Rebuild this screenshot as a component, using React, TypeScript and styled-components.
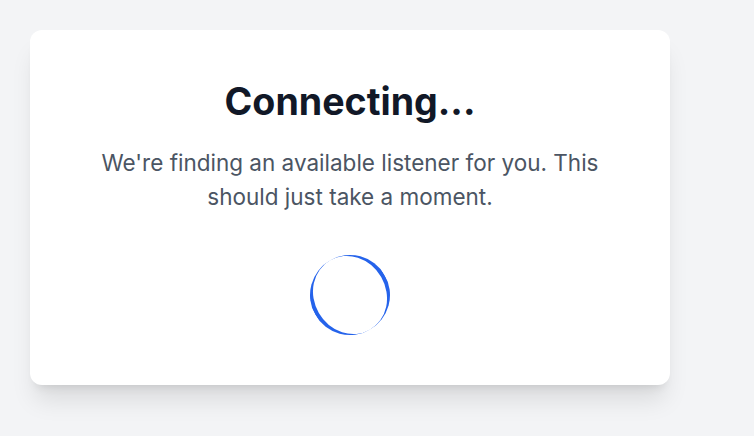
import React from 'react';
import styled, {createGlobalStyle} from 'styled-components';

const GlobalStyle = createGlobalStyle`
  html, body {
    margin: 0;
    padding: 0;
    background: #f3f4f6;
    font-family: Inter, "Noto Sans", "Liberation Sans", sans-serif;
  }
`;

const Page = styled.div`
  min-height: 436px;
  padding: 30px;
  box-sizing: border-box;
`;

const Card = styled.div`
  width: 640px;
  box-sizing: border-box;
  padding: 48px 48px 50px;
  background: #fff;
  border-radius: 12px;
  box-shadow: 0 20px 25px -5px rgba(0, 0, 0, 0.1), 0 8px 10px -6px rgba(0, 0, 0, 0.1);
  display: flex;
  flex-direction: column;
  align-items: center;
  text-align: center;
`;

const Title = styled.h1`
  margin: 0 0 20px;
  font-size: 37.6px;
  line-height: 48px;
  font-weight: 700;
  color: #111827;
`;

const Message = styled.p`
  margin: 0 0 41px;
  font-size: 22.5px;
  line-height: 34px;
  color: #4b5563;
`;

const Spinner = styled.div`
  width: 80px;
  height: 80px;
  box-sizing: border-box;
  border-radius: 50%;
  border-style: solid;
  border-color: #2563eb;
  border-width: 0 4px;
  transform: rotate(-30deg);
`;

function App() {
  return (
    <Page>
      <GlobalStyle/>
      <Card>
        <Title>Connecting...</Title>
        <Message>We're finding an available listener for you. This should just take a moment.</Message>
        <Spinner/>
      </Card>
    </Page>
  );
}

export default App;
